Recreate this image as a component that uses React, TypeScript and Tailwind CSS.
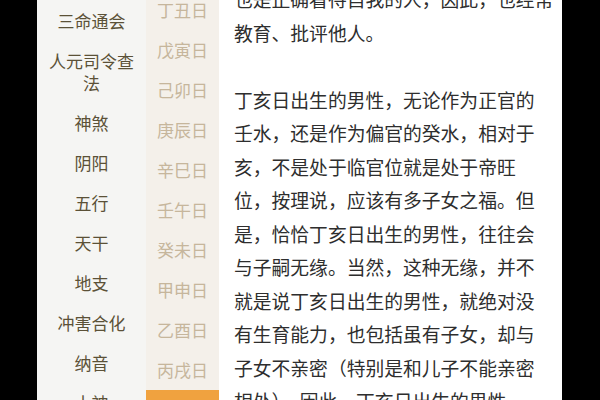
const navItems = [
  ["三命通会"],
  ["人元司令查", "法"],
  ["神煞"],
  ["阴阳"],
  ["五行"],
  ["天干"],
  ["地支"],
  ["冲害合化"],
  ["纳音"],
  ["十神"],
];

const days = ["丁丑日", "戊寅日", "己卯日", "庚辰日", "辛巳日", "壬午日", "癸未日", "甲申日", "乙酉日", "丙戌日"];

const lines = [
  "也是正确看待自我的人，因此，也经常",
  "教育、批评他人。",
  "",
  "丁亥日出生的男性，无论作为正官的",
  "壬水，还是作为偏官的癸水，相对于",
  "亥，不是处于临官位就是处于帝旺",
  "位，按理说，应该有多子女之福。但",
  "是，恰恰丁亥日出生的男性，往往会",
  "与子嗣无缘。当然，这种无缘，并不",
  "就是说丁亥日出生的男性，就绝对没",
  "有生育能力，也包括虽有子女，却与",
  "子女不亲密（特别是和儿子不能亲密",
  "相处）。因此，丁亥日出生的男性，",
];

export default function App() {
  return (
    <div
      className="flex h-[400px] w-[600px] overflow-hidden bg-black"
      style={{ fontFamily: '"Noto Sans CJK SC", "Noto Sans", sans-serif' }}
    >
      <div className="w-[37px] shrink-0 bg-black" />

      {/* category menu */}
      <nav className="flex w-[109px] shrink-0 flex-col bg-[#f5f5f3] pt-[1px] text-[17px] text-[#5b5137]">
        {navItems.map((item) => (
          <div key={item.join("")} className="flex flex-col items-center py-[9px] leading-[22px]">
            {item.map((l) => (
              <span key={l}>{l}</span>
            ))}
          </div>
        ))}
      </nav>

      {/* day list */}
      <div className="flex w-[73px] shrink-0 flex-col bg-[#f4f0ea] text-[17px] text-[#c6b69c]">
        <div className="mt-[-10px]">
          {days.map((d) => (
            <div key={d} className="flex h-[40px] items-center justify-center">
              {d}
            </div>
          ))}
          <div className="h-[40px] bg-[#f0a23f]" />
        </div>
      </div>

      {/* article */}
      <article className="w-[343px] shrink-0 bg-white pl-[15px] text-[18.8px] leading-[33.5px] text-[#2e2e2e]">
        <div className="mt-[-18px]">
          {lines.map((l, i) => (
            <div key={i} className="h-[33.5px] whitespace-nowrap">
              {l}
            </div>
          ))}
        </div>
      </article>

      <div className="flex-1 bg-black" />
    </div>
  );
}
